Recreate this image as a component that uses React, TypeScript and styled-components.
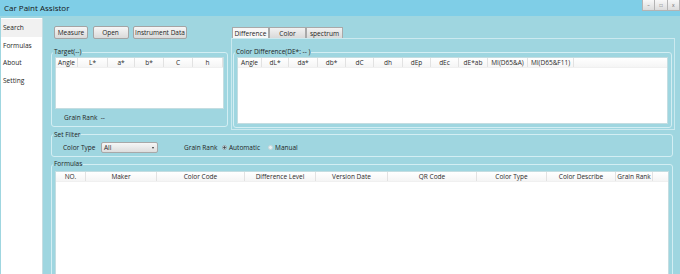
import styled, { createGlobalStyle } from 'styled-components';

const GlobalStyle = createGlobalStyle`
  html, body {
    margin: 0;
    padding: 0;
  }
  body {
    font-family: 'Open Sans', 'Noto Sans', sans-serif;
    font-size: 6.5px;
    color: #1e1e1e;
  }
  * {
    box-sizing: border-box;
  }
`;

const Window = styled.div`
  display: flex;
  flex-direction: column;
  width: 680px;
  height: 274px;
  overflow: hidden;
  background-color: #9fd6e0;
`;

const TitleBar = styled.div`
  display: flex;
  align-items: flex-start;
  flex-shrink: 0;
  height: 16px;
  background-color: #7fcee7;
  h1 {
    margin: 0;
    padding: 3px 0 0 4px;
    font-size: 8px;
    font-weight: 400;
    line-height: 10px;
    color: #141414;
  }
`;

const WinButtons = styled.div`
  display: flex;
  margin-left: auto;
`;

const WinButton = styled.div`
  display: flex;
  align-items: center;
  justify-content: center;
  width: 13.4px;
  height: 11px;
  border: 1px solid #b4b4b4;
  border-top: none;
  margin-left: -1px;
  background: linear-gradient(#f8f8f8, #dcdcdc);
  font-size: 5px;
  color: #666;
`;

const Body = styled.div`
  display: flex;
  flex: 1;
  padding-top: 2px;
`;

const Sidebar = styled.nav`
  display: flex;
  flex-direction: column;
  width: 42px;
  margin-left: 1px;
  padding-top: 1px;
  border-right: 1px solid #c6dde2;
  background-color: #ffffff;
`;

const NavItem = styled.div<{ $active?: boolean }>`
  display: flex;
  align-items: center;
  height: 17.6px;
  padding-left: 2px;
  background-color: ${(p) => (p.$active ? '#f1f1f1' : 'transparent')};
  font-size: 6.6px;
`;

const Main = styled.main`
  display: flex;
  flex-direction: column;
  flex: 1;
  padding: 8px 5px 0 8px;
`;

const TopRow = styled.div`
  display: flex;
  align-items: flex-start;
  gap: 3px;
`;

const LeftCol = styled.div`
  display: flex;
  flex-direction: column;
  width: 177px;
`;

const RightCol = styled.div`
  display: flex;
  flex-direction: column;
  width: 444px;
`;

const ButtonRow = styled.div`
  display: flex;
  gap: 4.5px;
  padding-left: 3px;
`;

const Button = styled.div<{ $w: number }>`
  display: flex;
  align-items: center;
  justify-content: center;
  width: ${(p) => p.$w}px;
  height: 13px;
  border: 1px solid #a4a4a4;
  border-radius: 2px;
  background: linear-gradient(#f6f6f6, #dadada);
`;

const GroupBox = styled.fieldset<{ $pt: number; $mt?: number; $mr?: number }>`
  min-width: 0;
  margin: ${(p) => p.$mt ?? 0}px ${(p) => p.$mr ?? 0}px 0 0;
  padding: ${(p) => p.$pt}px 3px 3px 3px;
  border: 1px solid #d3eef3;
  border-radius: 3px;
  legend {
    margin-left: -2px;
    padding: 0 1px;
    font-size: 6.5px;
    line-height: 8px;
  }
`;

const GrainLine = styled.div`
  height: 10px;
  margin-top: 4px;
  padding-left: 9px;
  line-height: 10px;
`;

const Tabs = styled.div`
  display: flex;
  margin-top: 1px;
  padding-left: 1px;
`;

const Tab = styled.div<{ $w: number; $active?: boolean }>`
  display: flex;
  align-items: center;
  justify-content: center;
  width: ${(p) => p.$w}px;
  height: 11px;
  border: 1px solid #a9a9a9;
  border-bottom: none;
  background: ${(p) => (p.$active ? '#f7f7f7' : 'linear-gradient(#f2f2f2, #d9d9d9)')};
  font-size: 6.6px;
`;

const TabPanel = styled.div`
  height: 92px;
  padding: 9px 2px 0 1px;
  border: 1px solid #cbe9ef;
`;

const Grid = styled.div<{ $h: number }>`
  height: ${(p) => p.$h}px;
  border: 1px solid #c4dde1;
  background-color: #ffffff;
  overflow: hidden;
`;

const HeaderRow = styled.div`
  display: flex;
  height: 10px;
  background: linear-gradient(#ffffff, #f5f5f5);
  border-bottom: 1px solid #f0f0f0;
`;

const HeaderCell = styled.div<{ $w: number }>`
  flex-shrink: 0;
  width: ${(p) => p.$w}px;
  border-right: 1px solid #e2e2e2;
  line-height: 9px;
  text-align: center;
  white-space: nowrap;
  color: #2a2a2a;
`;

const FilterRow = styled.div`
  display: flex;
  align-items: center;
  height: 11px;
  padding-left: 8px;
`;

const FieldLabel = styled.span<{ $w: number }>`
  width: ${(p) => p.$w}px;
  flex-shrink: 0;
`;

const Select = styled.div`
  display: flex;
  align-items: center;
  width: 57px;
  height: 11px;
  padding: 0 3px 0 2px;
  border: 1px solid #a8a8a8;
  border-radius: 2px;
  background: linear-gradient(#f6f6f6, #dddddd);
  span {
    margin-left: auto;
    border-left: 1.5px solid transparent;
    border-right: 1.5px solid transparent;
    border-top: 2px solid #333;
  }
`;

const RadioOption = styled.label`
  display: flex;
  align-items: center;
  gap: 2px;
  margin-right: 8px;
`;

const RadioDot = styled.span<{ $checked?: boolean }>`
  width: 5px;
  height: 5px;
  border-radius: 50%;
  border: 1px solid ${(p) => (p.$checked ? '#9aa4a8' : '#c9d6da')};
  background: ${(p) =>
    p.$checked ? 'radial-gradient(#3c4a50 45%, #e6eef0 55%)' : '#e8f1f3'};
`;

const targetCols: [string, number][] = [
  ['Angle', 22],
  ['L*', 30],
  ['a*', 27],
  ['b*', 29],
  ['C', 29],
  ['h', 30],
];

const diffCols: [string, number][] = [
  ['Angle', 24],
  ['dL*', 27],
  ['da*', 29],
  ['db*', 28],
  ['dC', 28],
  ['dh', 29],
  ['dEp', 28],
  ['dEc', 28],
  ['dE*ab', 29],
  ['MI(D65&A)', 40],
  ['MI(D65&F11)', 46],
];

const formulaCols: [string, number][] = [
  ['NO.', 30],
  ['Maker', 71],
  ['Color Code', 88],
  ['Difference Level', 71],
  ['Version Date', 72],
  ['QR Code', 89],
  ['Color Type', 70],
  ['Color Describe', 69],
  ['Grain Rank', 37],
];

function DataGrid({ cols, height }: { cols: [string, number][]; height: number }) {
  return (
    <Grid $h={height}>
      <HeaderRow>
        {cols.map(([name, w]) => (
          <HeaderCell key={name} $w={w}>
            {name}
          </HeaderCell>
        ))}
      </HeaderRow>
    </Grid>
  );
}

export default function App() {
  return (
    <Window>
      <GlobalStyle />
      <TitleBar>
        <h1>Car Paint Assistor</h1>
        <WinButtons>
          <WinButton>–</WinButton>
          <WinButton>□</WinButton>
          <WinButton>x</WinButton>
        </WinButtons>
      </TitleBar>
      <Body>
        <Sidebar>
          <NavItem $active>Search</NavItem>
          <NavItem>Formulas</NavItem>
          <NavItem>About</NavItem>
          <NavItem>Setting</NavItem>
        </Sidebar>
        <Main>
          <TopRow>
            <LeftCol>
              <ButtonRow>
                <Button $w={34}>Measure</Button>
                <Button $w={36}>Open</Button>
                <Button $w={54}>Instrument Data</Button>
              </ButtonRow>
              <GroupBox $pt={1} $mt={9}>
                <legend>Target(--)</legend>
                <DataGrid cols={targetCols} height={52} />
                <GrainLine>Grain Rank&nbsp; --</GrainLine>
              </GroupBox>
            </LeftCol>
            <RightCol>
              <Tabs>
                <Tab $w={37} $active>
                  Difference
                </Tab>
                <Tab $w={37}>Color</Tab>
                <Tab $w={37}>spectrum</Tab>
              </Tabs>
              <TabPanel>
                <GroupBox $pt={1}>
                  <legend>Color Difference(DE*: -- )</legend>
                  <DataGrid cols={diffCols} height={67} />
                </GroupBox>
              </TabPanel>
            </RightCol>
          </TopRow>
          <GroupBox $pt={3.5} $mt={0.5} $mr={2}>
            <legend>Set Filter</legend>
            <FilterRow>
              <FieldLabel $w={38}>Color Type</FieldLabel>
              <Select>
                All
                <span />
              </Select>
              <FieldLabel $w={38} style={{ marginLeft: 26 }}>
                Grain Rank
              </FieldLabel>
              <RadioOption>
                <RadioDot $checked />
                Automatic
              </RadioOption>
              <RadioOption>
                <RadioDot />
                Manual
              </RadioOption>
            </FilterRow>
          </GroupBox>
          <GroupBox $pt={3} $mt={3} $mr={2}>
            <legend>Formulas</legend>
            <DataGrid cols={formulaCols} height={120} />
          </GroupBox>
        </Main>
      </Body>
    </Window>
  );
}
